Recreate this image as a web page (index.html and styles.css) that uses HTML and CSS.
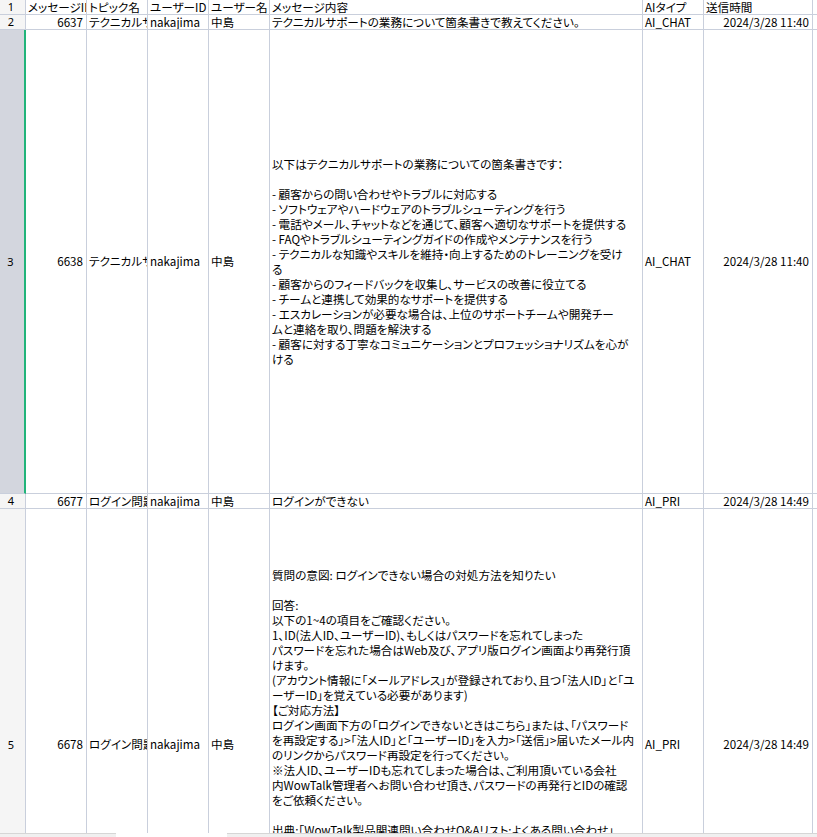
FILE: index.html
```html
<!DOCTYPE html>
<html lang="ja">
<head>
<meta charset="utf-8">
<title>Sheet</title>
<link rel="stylesheet" href="styles.css">
</head>
<body>
<div class="window">
  <div class="sheet">
    <div class="row short">
      <div class="rh">1</div>
      <div class="c">メッセージID</div>
      <div class="c">トピック名</div>
      <div class="c">ユーザーID</div>
      <div class="c">ユーザー名</div>
      <div class="c">メッセージ内容</div>
      <div class="c">AIタイプ</div>
      <div class="c">送信時間</div>
      <div class="c"></div>
    </div>
    <div class="row short">
      <div class="rh">2</div>
      <div class="c num">6637</div>
      <div class="c">テクニカルサポート</div>
      <div class="c">nakajima</div>
      <div class="c">中島</div>
      <div class="c">テクニカルサポートの業務について箇条書きで教えてください。</div>
      <div class="c">AI_CHAT</div>
      <div class="c num">2024/3/28 11:40</div>
      <div class="c"></div>
    </div>
    <div class="row tall row3 sel">
      <div class="rh">3</div>
      <div class="c num">6638</div>
      <div class="c">テクニカルサポート</div>
      <div class="c">nakajima</div>
      <div class="c">中島</div>
      <div class="c msg"><div class="txt">以下はテクニカルサポートの業務についての箇条書きです：<br><br>- 顧客からの問い合わせやトラブルに対応する<br>- ソフトウェアやハードウェアのトラブルシューティングを行う<br>- 電話やメール、チャットなどを通じて、顧客へ適切なサポートを提供する<br>- FAQやトラブルシューティングガイドの作成やメンテナンスを行う<br>- テクニカルな知識やスキルを維持・向上するためのトレーニングを受け<br>る<br>- 顧客からのフィードバックを収集し、サービスの改善に役立てる<br>- チームと連携して効果的なサポートを提供する<br>- エスカレーションが必要な場合は、上位のサポートチームや開発チー<br>ムと連絡を取り、問題を解決する<br>- 顧客に対する丁寧なコミュニケーションとプロフェッショナリズムを心が<br>ける</div></div>
      <div class="c">AI_CHAT</div>
      <div class="c num">2024/3/28 11:40</div>
      <div class="c"></div>
    </div>
    <div class="row short">
      <div class="rh">4</div>
      <div class="c num">6677</div>
      <div class="c">ログイン問題</div>
      <div class="c">nakajima</div>
      <div class="c">中島</div>
      <div class="c">ログインができない</div>
      <div class="c">AI_PRI</div>
      <div class="c num">2024/3/28 14:49</div>
      <div class="c"></div>
    </div>
    <div class="row tall row5">
      <div class="rh">5</div>
      <div class="c num">6678</div>
      <div class="c">ログイン問題</div>
      <div class="c">nakajima</div>
      <div class="c">中島</div>
      <div class="c msg msg-top"><div class="txt">質問の意図: ログインできない場合の対処方法を知りたい<br><br>回答:<br>以下の1~4の項目をご確認ください。<br>1、ID(法人ID、ユーザーID)、もしくはパスワードを忘れてしまった<br>パスワードを忘れた場合はWeb及び、アプリ版ログイン画面より再発行頂<br>けます。<br>(アカウント情報に「メールアドレス」が登録されており、且つ「法人ID」と「ユ<br>ーザーID」を覚えている必要があります)<br>【ご対応方法】<br>ログイン画面下方の「ログインできないときはこちら」または、「パスワード<br>を再設定する」&gt;「法人ID」と「ユーザーID」を入力&gt;「送信」&gt;届いたメール内<br>のリンクからパスワード再設定を行ってください。<br>※法人ID、ユーザーIDも忘れてしまった場合は、ご利用頂いている会社<br>内WowTalk管理者へお問い合わせ頂き、パスワードの再発行とIDの確認<br>をご依頼ください。<br><br>出典:「WowTalk製品関連問い合わせQ&amp;Aリスト:よくある問い合わせ」</div></div>
      <div class="c">AI_PRI</div>
      <div class="c num">2024/3/28 14:49</div>
      <div class="c"></div>
    </div>
  </div>
  <div class="tabbar">
    <div class="tb tb-a"></div>
    <div class="tb tb-b"></div>
    <div class="tb tb-c"></div>
  </div>
</div>
</body>
</html>
```

FILE: styles.css
```css
* {
  box-sizing: border-box;
}

html,
body {
  margin: 0;
  padding: 0;
  background: #ffffff;
}

body {
  font-family: "Noto Sans CJK JP", "Noto Sans", sans-serif;
  font-size: 11.6px;
  color: #000000;
  font-feature-settings: "palt";
}

.window {
  width: 817px;
  height: 837px;
  display: flex;
  flex-direction: column;
  overflow: hidden;
}

.sheet {
  flex: 0 0 833px;
  overflow: hidden;
}

.row {
  display: grid;
  grid-template-columns: 26px 61px 61px 61px 61px 373px 61px 109px 1fr;
}

.row > div {
  border-right: 1px solid #c9cfdc;
  border-bottom: 1px solid #c9cfdc;
  overflow: hidden;
  white-space: nowrap;
  display: flex;
  align-items: flex-end;
  padding: 0 2px;
  line-height: 14px;
}

.short {
  height: 15px;
}

.row3 {
  height: 464px;
}

.row5 {
  height: 471px;
}

.tall > div {
  align-items: center;
  line-height: 15px;
}

.rh {
  justify-content: center;
  padding-right: 5px !important;
  background: #f5f5f5;
  font-family: "Noto Sans", sans-serif;
  font-size: 11px;
}

.sel .rh {
  background: #d3d6de;
  border-right: 2px solid #21b47a !important;
}

.num {
  justify-content: flex-end;
  padding-right: 3px !important;
}

.msg {
  flex-direction: column;
  justify-content: center;
}

.tall > .msg {
  align-items: flex-start;
}

.tall > .msg-top {
  justify-content: flex-start;
  padding-top: 59px;
}

.txt {
  white-space: nowrap;
}

.tabbar {
  flex: 0 0 24px;
  display: flex;
}

.tb-a {
  width: 116px;
  background: #f0f0f0;
  border-top: 1px solid #d6d6d6;
}

.tb-b {
  width: 111px;
  background: #ffffff;
}

.tb-c {
  flex: 1;
  background: #f0f0f0;
  border-top: 1px solid #d6d6d6;
}
```
